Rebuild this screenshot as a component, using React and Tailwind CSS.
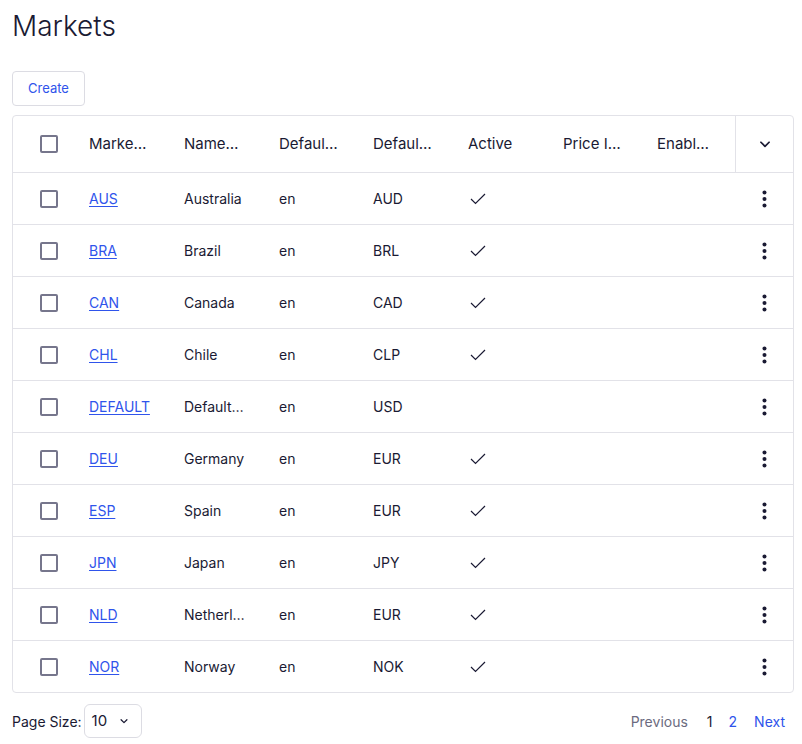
import React from 'react';

const markets = [
  { code: 'AUS', name: 'Australia', locale: 'en', currency: 'AUD', active: true },
  { code: 'BRA', name: 'Brazil', locale: 'en', currency: 'BRL', active: true },
  { code: 'CAN', name: 'Canada', locale: 'en', currency: 'CAD', active: true },
  { code: 'CHL', name: 'Chile', locale: 'en', currency: 'CLP', active: true },
  { code: 'DEFAULT', name: 'Default…', locale: 'en', currency: 'USD', active: false },
  { code: 'DEU', name: 'Germany', locale: 'en', currency: 'EUR', active: true },
  { code: 'ESP', name: 'Spain', locale: 'en', currency: 'EUR', active: true },
  { code: 'JPN', name: 'Japan', locale: 'en', currency: 'JPY', active: true },
  { code: 'NLD', name: 'Netherl…', locale: 'en', currency: 'EUR', active: true },
  { code: 'NOR', name: 'Norway', locale: 'en', currency: 'NOK', active: true },
];

const headers = ['Marke…', 'Name…', 'Defaul…', 'Defaul…', 'Active', 'Price I…', 'Enabl…'];
const widths = ['w-[95px]', 'w-[95px]', 'w-[94px]', 'w-[95px]', 'w-[95px]', 'w-[94px]', 'w-[90px]'];

function Checkbox() {
  return <span className="block w-[18px] h-[18px] border-2 border-[#76768c] rounded-[2px]"></span>;
}

function Check() {
  return (
    <svg width="16" height="12" viewBox="0 0 16 12" fill="none" stroke="#1a1a33" strokeWidth="1.2">
      <path d="M1 6 L5.5 10.5 L15 1" />
    </svg>
  );
}

function Dots() {
  return (
    <svg width="5" height="18" viewBox="0 0 5 18" fill="#1a1a33">
      <circle cx="2.5" cy="2.5" r="2" />
      <circle cx="2.5" cy="9" r="2" />
      <circle cx="2.5" cy="15.5" r="2" />
    </svg>
  );
}

function App() {
  return (
    <div className="pl-3 pr-2 pt-2 bg-white text-[#1a1a33]" style={{ fontFamily: 'Inter, "Noto Sans", sans-serif' }}>
      <h1 className="text-[28px] leading-[36px] font-light">Markets</h1>

      <button className="mt-[27px] h-[35px] px-[15px] border border-[#dcdce3] rounded text-[13px] text-[#2f54eb]">
        Create
      </button>

      <div className="mt-[9px] border border-[#e2e2e8] rounded">
        {/* header */}
        <div className="flex h-[57px] border-b border-[#e2e2e8] items-stretch">
          <div className="w-[64px] shrink-0 flex items-center pl-[27px]">
            <Checkbox />
          </div>
          {headers.map((h, i) => (
            <div key={i} className={`${widths[i]} shrink-0 flex items-center pl-3 text-[15px] whitespace-nowrap`}>
              {h}
            </div>
          ))}
          <div className="w-[58px] shrink-0 flex items-center justify-center border-l border-[#e2e2e8]">
            <svg width="14" height="14" viewBox="0 0 24 24" fill="none" stroke="#1a1a33" strokeWidth="3" strokeLinecap="round" strokeLinejoin="round">
              <path d="M5 9l7 7 7-7" />
            </svg>
          </div>
        </div>

        {markets.map((m, idx) => (
          <div
            key={m.code}
            className={`flex items-stretch text-[14px] ${idx === markets.length - 1 ? 'h-[51px]' : 'h-[52px] border-b border-[#e2e2e8]'}`}
          >
            <div className="w-[64px] shrink-0 flex items-center pl-[27px]">
              <Checkbox />
            </div>
            <div className="w-[95px] shrink-0 flex items-center pl-3">
              <a href="#" className="text-[#2f54eb] underline underline-offset-2">{m.code}</a>
            </div>
            <div className="w-[95px] shrink-0 flex items-center pl-3 whitespace-nowrap">{m.name}</div>
            <div className="w-[94px] shrink-0 flex items-center pl-3">{m.locale}</div>
            <div className="w-[95px] shrink-0 flex items-center pl-3">{m.currency}</div>
            <div className="w-[95px] shrink-0 flex items-center pl-[14px]">{m.active && <Check />}</div>
            <div className="w-[94px] shrink-0"></div>
            <div className="w-[90px] shrink-0"></div>
            <div className="w-[58px] shrink-0 flex items-center justify-center pl-px">
              <Dots />
            </div>
          </div>
        ))}
      </div>

      <div className="mt-[11px] flex items-center justify-between">
        <div className="flex items-center gap-[2px] text-[14px]">
          <span>Page Size:</span>
          <div className="h-[34px] w-[58px] border border-[#dcdce3] rounded-md flex items-center justify-between pl-[7px] pr-[12px]">
            <span className="text-[15px]">10</span>
            <svg width="10" height="10" viewBox="0 0 24 24" fill="none" stroke="#1a1a33" strokeWidth="3" strokeLinecap="round" strokeLinejoin="round">
              <path d="M5 9l7 7 7-7" />
            </svg>
          </div>
        </div>
        <div className="flex items-center text-[14px] pr-[9px]">
          <span className="text-[#6b6b80]">Previous</span>
          <span className="ml-[19px]">1</span>
          <span className="ml-[16px] text-[#2f54eb]">2</span>
          <span className="ml-[17px] text-[#2f54eb]">Next</span>
        </div>
      </div>
    </div>
  );
}

export default App;
